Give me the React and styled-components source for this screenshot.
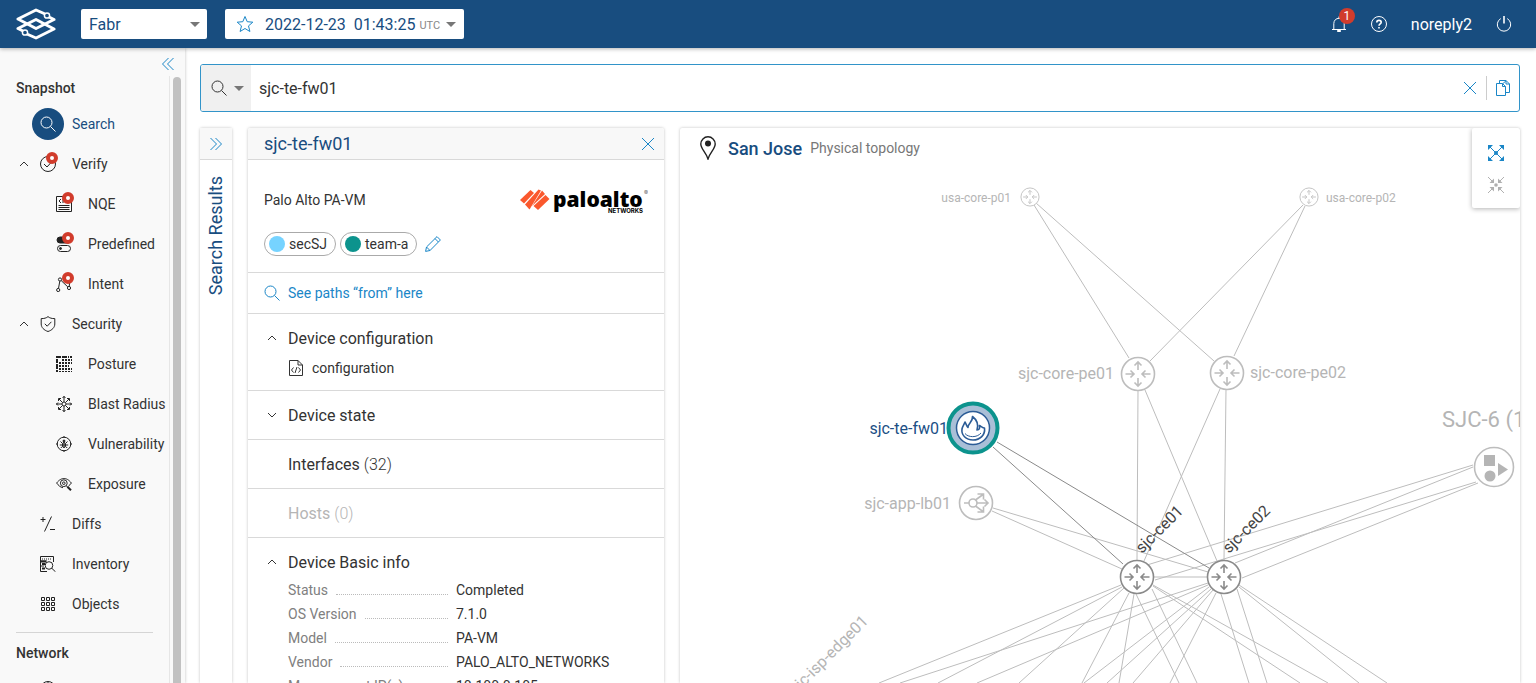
import styled, { createGlobalStyle } from "styled-components";

import { useState } from "react";

const GlobalStyle = createGlobalStyle`
    * {
        box-sizing: border-box;
    }

    body {
        margin: 0;
        background: #fff;
        color: #333;
        font-family: Roboto, sans-serif;
        font-size: 14px;
    }

    button, input, select {
        font-family: inherit;
        font-size: inherit;
        color: inherit;
    }

    a {
        color: inherit;
        text-decoration: none;
    }
`

// every small icon is drawn on a 16px grid with thin strokes
function Icon({ size = 16, label, children }){
    return (
        <IconSvg width={size} height={size} viewBox="0 0 16 16" role={label ? 'img' : undefined} aria-label={label} aria-hidden={label ? undefined : true}>
            {children}
        </IconSvg>
    )
}

const glass = <><circle cx="6.5" cy="6.5" r="5.5"/><path d="M10.5 10.5L15.5 15.5"/></>;
const cross = <path d="M2 2L14 14M14 2L2 14"/>;
const caretUp = <path d="M4 10L8 6L12 10"/>;
const caretDown = <path d="M4 6L8 10L12 6"/>;

const icons = {
    search: glass,
    verify: <><circle cx="8" cy="8" r="7.5"/><path d="M4 8L7 11L11.5 6"/></>,
    nqe: <><path d="M.5 .5H15.5V15.5H.5ZM2.5 9.5H13.5M2.5 11.5H13.5M2.5 13.5H13.5M5 3L3 5L5 7M7 3V7"/></>,
    predefined: <><rect x="1" y="1" width="14" height="6" rx="3" fill="currentColor"/><rect x="1.5" y="9.5" width="13" height="6" rx="3"/><circle cx="4.5" cy="12.5" r="1" fill="currentColor"/></>,
    intent: <><circle cx="2.2" cy="14" r="1.6"/><circle cx="4" cy="3.5" r="1.6"/><circle cx="13" cy="12" r="1.6"/><path d="M2.5 12.4L3.8 5.1M5.2 4.6L11.8 10.9M13.2 10.4L14 4"/></>,
    security: <><path d="M8 .6C6.5 2 4 2.7 1.2 2.6V8C1.2 11.5 4 14.2 8 15.5C12 14.2 14.8 11.5 14.8 8V2.6C12 2.7 9.5 2 8 .6Z"/><path d="M4.8 7.8L7.2 10.2L11.4 5.8"/></>,
    posture: <><path d="M1 0V16" strokeWidth="2" strokeDasharray="2 1 4 1 5 1"/><path d="M0 1H16" strokeWidth="2" strokeDasharray="5 1 5 1 1 1"/><path d="M6 4H16M3 7H16M3 10H13M3 13H16" strokeWidth="2" strokeDasharray="2 1"/><path d="M0 15.5H16" strokeDasharray="2 1"/></>,
    blast: <><circle cx="8" cy="8" r="2"/><path d="M8 0V6M8 10V16M0 8H6M10 8H16M3 3L6.5 6.5M9.5 9.5L13 13M13 3L9.5 6.5M6.5 9.5L3 13"/><path d="M6.5 2L8 .5L9.5 2M6.5 14L8 15.5L9.5 14M2 6.5L.5 8L2 9.5M14 6.5L15.5 8L14 9.5M2.5 5V2.5H5M11 2.5H13.5V5M13.5 11V13.5H11M5 13.5H2.5V11"/></>,
    vulnerability: <><circle cx="8" cy="8" r="6.8"/><path d="M8 0V2M8 14V16M0 8H2M14 8H16"/><ellipse cx="8" cy="9" rx="1.6" ry="2.6"/><path d="M8 6.5V11.5"/><circle cx="8" cy="5" r="1" fill="currentColor"/><path d="M4.5 5.5L6.3 7.3M11.5 5.5L9.7 7.3M3.8 9H12.2M4.8 12L6.3 10.5M11.2 12L9.7 10.5"/></>,
    exposure: <><path d="M.6 7C3.5 3.5 5.5 2.6 8 2.6S12.5 3.5 15.4 7C14.5 8.4 13.5 9.3 12.5 10M7 11.7C4.5 11.5 2.5 9.5 .6 7"/><circle cx="7.8" cy="7.2" r="3.4"/><circle cx="7.8" cy="7.2" r="1.3"/><path d="M10.3 9.8L11.5 11"/><path d="M11.4 10.8L15 14.3" strokeWidth="2"/></>,
    diffs: <><path d="M3 1V6M.5 3.5H5.5M10 13.5H15M11.5 .5L4.5 15.5"/></>,
    inventory: <><path d="M13.5 6V.5H.5V15.5H7M.5 5H7M.5 10H4"/><path d="M2 3H12" strokeDasharray="1 1"/><path d="M0 5.5H6M2 8H5M2 12.5H5" strokeWidth="2"/><circle cx="9" cy="9.5" r="3.8"/><path d="M11.8 12.3L15.5 15.8"/></>,
    objects: <path d="M1.5 1.5H4.5V4.5H1.5ZM6.5 1.5H9.5V4.5H6.5ZM11.5 1.5H14.5V4.5H11.5ZM1.5 6.5H4.5V9.5H1.5ZM6.5 6.5H9.5V9.5H6.5ZM11.5 6.5H14.5V9.5H11.5ZM1.5 11.5H4.5V14.5H1.5ZM6.5 11.5H9.5V14.5H6.5ZM11.5 11.5H14.5V14.5H11.5Z"/>,
    network: <><circle cx="8" cy="8" r="7.5"/><path d="M.5 8H15.5M8 .5V15.5"/></>,
};

const menu = [
    { icon: 'search', text: 'Search', active: true },
    { icon: 'verify', text: 'Verify', caret: true, alert: true },
    { icon: 'nqe', text: 'NQE', nested: true, alert: true },
    { icon: 'predefined', text: 'Predefined', nested: true, alert: true },
    { icon: 'intent', text: 'Intent', nested: true, alert: true },
    { icon: 'security', text: 'Security', caret: true },
    { icon: 'posture', text: 'Posture', nested: true },
    { icon: 'blast', text: 'Blast Radius', nested: true },
    { icon: 'vulnerability', text: 'Vulnerability', nested: true },
    { icon: 'exposure', text: 'Exposure', nested: true },
    { icon: 'diffs', text: 'Diffs' },
    { icon: 'inventory', text: 'Inventory' },
    { icon: 'objects', text: 'Objects' },
];

const basicInfo = [
    ['Status', 'Completed'],
    ['OS Version', '7.1.0'],
    ['Model', 'PA-VM'],
    ['Vendor', 'PALO_ALTO_NETWORKS'],
    ['Management IP(s)', '10.100.0.105'],
];

// x1, y1, x2, y2 on the canvas
const links = [
    [354, 77, 449, 230], [356, 75, 534, 233], [623, 77, 470, 233], [625, 78, 554, 228],
    [458, 262, 457, 432], [465, 262, 537, 433], [546, 261, 544, 432], [540, 261, 464, 433],
    [312, 383, 442, 441], [313, 380, 528, 444], [474, 449, 527, 449],
    [793, 337, 467, 437], [793, 339, 555, 435], [796, 354, 475, 452], [798, 355, 562, 450],
    [441, 457, 199, 555], [442, 459, 258, 555], [444, 460, 339, 555], [449, 465, 402, 555],
    [454, 466, 439, 555], [456, 466, 499, 555], [472, 461, 517, 555], [473, 458, 620, 555],
    [473, 457, 648, 555], [528, 455, 220, 555], [528, 457, 297, 555], [529, 459, 404, 555],
    [531, 461, 427, 555], [533, 462, 453, 555], [536, 465, 490, 555], [541, 466, 569, 555],
    [557, 461, 587, 555], [559, 459, 679, 555], [559, 457, 707, 555],
];

const activeLinks = [
    [313, 319, 443, 436], [317, 314, 529, 440],
];

function Logo(){
    return (
        <svg width="40" height="32" viewBox="0 0 40 32" role="img" aria-label="Forward">
            <g fill="none" stroke="#fff" strokeWidth="3" strokeLinejoin="round" strokeLinecap="round">
                <path d="M28 5.5L20 2L2 11L20 20.5L38 11.5L34 9.5"/>
                <path d="M12 26.5L20 30L38 21L20 11.5L2 20.5L6 22.5"/>
            </g>
            <g fill="#184d7f" stroke="#fff" strokeWidth="1.5">
                <circle cx="31" cy="7.5" r="2.6"/>
                <circle cx="9" cy="24.5" r="2.6"/>
            </g>
        </svg>
    )
}

function VendorLogo(){
    return (
        <svg width="130" height="28" viewBox="0 0 130 28" role="img" aria-label="Palo Alto Networks">
            <g fill="#fa582d">
                <path d="M2 14L12.5 4L16 7L6 17.5Z"/>
                <path d="M7 18.5L20.5 3.5L23 4.5L11.5 23.5Z"/>
                <path d="M24 4.5L27 8L14 20Z"/>
                <path d="M15.5 20L27.5 9L31.5 13L20 24Z"/>
            </g>
            <VendorText x="35" y="21">paloalto</VendorText>
            <VendorSub x="125" y="27" textAnchor="end">NETWORKS</VendorSub>
            <VendorSub x="126" y="9" $light>®</VendorSub>
        </svg>
    )
}

function Router({ x, y, scale = 1, strong }){
    return (
        <NodeGroup transform={`translate(${x} ${y}) scale(${scale})`} $strong={strong}>
            <circle r="16.5"/>
            <path d="M0 -4V-11.5M-3.5 -8.5L0 -12L3.5 -8.5M0 4V11.5M-3.5 8.5L0 12L3.5 8.5"/>
            <path d="M-12.5 0H-4.5M-7.5 -3.5L-4 0L-7.5 3.5M12.5 0H4.5M7.5 -3.5L4 0L7.5 3.5"/>
        </NodeGroup>
    )
}

function Topology(){
    return (
        <Canvas role="img" aria-label="San Jose topology">
            <g stroke="#bdbdbd">
                {links.map((l, i) => <line key={i} x1={l[0]} y1={l[1]} x2={l[2]} y2={l[3]}/>)}
            </g>
            <g stroke="#8a8a8a">
                {activeLinks.map((l, i) => <line key={i} x1={l[0]} y1={l[1]} x2={l[2]} y2={l[3]}/>)}
            </g>

            <Router x={350} y={69} scale={0.55}/>
            <Router x={629} y={69} scale={0.55}/>
            <Router x={458} y={246}/>
            <Router x={547} y={245}/>
            <Router x={457} y={449} strong/>
            <Router x={544} y={449} strong/>

            <NodeGroup transform="translate(296 375)">
                <circle r="16.5"/>
                <circle cx="-3" r="4"/>
                <path d="M-12 0H-7M1 0H12M8.5 -3.5L12 0L8.5 3.5M-.5 -3L7 -8.5M1.5 -9H7.5V-3.5M-.5 3L7 8.5M1.5 9H7.5V3.5"/>
            </NodeGroup>

            <g transform="translate(293 300)">
                <circle r="24.5" fill="#a9bfd7" stroke="#0c938d" strokeWidth="4"/>
                <circle r="16.5" fill="#fff" stroke="#2c5c96" strokeWidth="1.5"/>
                <path d="M-.5 -11.5C4 -8 6 -4 4 2C6.5 2 7 0 6.5 -2.5C9 -1 10 0 11.5 0C12.5 7 7 12 0 12C-7 12 -12 7 -11 1C-10.5 -2 -9 -3 -8 -6C-7 -4.5 -6.5 -2 -5 -.5C-5 -5 0 -6 -.5 -11.5Z" fill="none" stroke="#2c5c96" strokeWidth="1.6" strokeLinejoin="round"/>
                <path d="M-8 5.5C-5 9.5 4 10 8 5" fill="none" stroke="#2c5c96"/>
            </g>

            <NodeGroup transform="translate(814 339)">
                <circle r="19.5"/>
                <g fill="#b5b5b5" stroke="none">
                    <path d="M-10 -12H1V-1H-10Z"/>
                    <path d="M4 -4L14 2.5L4 9Z"/>
                    <path d="M-9.5 9A5.5 5.5 0 1 0 1.5 9A5.5 5.5 0 1 0 -9.5 9Z"/>
                </g>
            </NodeGroup>

            <NodeLabel x="331" y="74" textAnchor="end" $small>usa-core-p01</NodeLabel>
            <NodeLabel x="646" y="74" $small>usa-core-p02</NodeLabel>
            <NodeLabel x="434" y="251" textAnchor="end">sjc-core-pe01</NodeLabel>
            <NodeLabel x="570" y="250">sjc-core-pe02</NodeLabel>
            <NodeLabel x="268" y="306" textAnchor="end" $color="#1b4f85">sjc-te-fw01</NodeLabel>
            <NodeLabel x="271" y="381" textAnchor="end">sjc-app-lb01</NodeLabel>
            <NodeLabel $large x="762" y="299">SJC-6 (1)</NodeLabel>
            <NodeLabel transform="translate(462 426) rotate(-45)" $color="#444">sjc-ce01</NodeLabel>
            <NodeLabel transform="translate(549 426) rotate(-45)" $color="#444">sjc-ce02</NodeLabel>
            <NodeLabel transform="translate(189 494) rotate(-45)" textAnchor="end">sjc-isp-edge01</NodeLabel>
        </Canvas>
    )
}

function Section({ title, count, startOpen, disabled, children }){
    const [open, setOpen] = useState(startOpen);

    return (
        <SectionBox>
            <SectionTitle disabled={disabled} onClick={() => setOpen(!open)}>
                <CaretBox>
                    {children && <Icon>{open ? caretUp : caretDown}</Icon>}
                </CaretBox>
                {title} {count !== undefined && <Count>({count})</Count>}
            </SectionTitle>
            {open && children}
        </SectionBox>
    )
}

function App(){
    return (
        <Page>
            <GlobalStyle/>

            <TopBar>
                <Logo/>
                <NetworkSelect>
                    <select aria-label="Network" defaultValue="Fabr">
                        <option>Fabr</option>
                    </select>
                    <Triangle/>
                </NetworkSelect>
                <SnapshotButton>
                    <Star width="18" height="18" viewBox="0 0 18 18" aria-hidden="true">
                        <path d="M9 1.5L11.2 6.7L16.8 7.2L12.5 10.9L13.9 16.5L9 13.5L4.1 16.5L5.5 10.9L1.2 7.2L6.8 6.7Z"/>
                    </Star>
                    <span>2022-12-23&nbsp; 01:43:25</span>
                    <Zone>UTC</Zone>
                    <Triangle/>
                </SnapshotButton>
                <TopRight>
                    <BarButton aria-label="Notifications">
                        <Icon><path d="M1 13.5H15M2.8 13.5V7.5C2.8 4.5 5 2.3 8 2.3S13.2 4.5 13.2 7.5V13.5M8 .5V2.3"/><path d="M6.2 15H9.8" strokeWidth="2"/></Icon>
                        <Counter>1</Counter>
                    </BarButton>
                    <BarButton aria-label="Help">
                        <Icon><circle cx="8" cy="8" r="7.5"/><path d="M5.8 6.4C5.8 3.6 10.2 3.7 10.2 6.3C10.2 8 8 7.9 8 9.8M8 11V12.5" strokeWidth="1.6"/></Icon>
                    </BarButton>
                    <User href="#">noreply2</User>
                    <BarButton aria-label="Sign out">
                        <Icon><path d="M4.8 2.6A6.7 6.7 0 1 0 11.2 2.6"/><path d="M8 0V7.5" strokeWidth="1.6"/></Icon>
                    </BarButton>
                </TopRight>
            </TopBar>

            <Body>
                <SideBar>
                    <CollapseRow>
                        <BlueButton aria-label="Collapse menu">
                            <Icon><path d="M8.5 2L2.5 8L8.5 14M13.5 2L7.5 8L13.5 14"/></Icon>
                        </BlueButton>
                    </CollapseRow>
                    <MenuArea>
                        <Menu>
                            <MenuTitle>Snapshot</MenuTitle>
                            {menu.map((item) => (
                                <MenuItem key={item.text} href="#" $active={item.active}>
                                    <CaretBox>
                                        {item.caret && <Icon>{caretUp}</Icon>}
                                    </CaretBox>
                                    <MenuIcon $active={item.active} $nested={item.nested}>
                                        <Icon>{icons[item.icon]}</Icon>
                                        {item.alert && <AlertDot/>}
                                    </MenuIcon>
                                    {item.text}
                                </MenuItem>
                            ))}
                            <Divider/>
                            <MenuTitle>Network</MenuTitle>
                            <MenuItem href="#">
                                <CaretBox/>
                                <MenuIcon>
                                    <Icon>{icons.network}</Icon>
                                </MenuIcon>
                            </MenuItem>
                        </Menu>
                        <Track>
                            <Thumb/>
                        </Track>
                    </MenuArea>
                </SideBar>

                <Main>
                    <SearchBar>
                        <SearchKind aria-label="Search type">
                            <Icon>{glass}</Icon>
                            <Triangle/>
                        </SearchKind>
                        <input aria-label="Search" defaultValue="sjc-te-fw01"/>
                        <BlueButton aria-label="Clear search">
                            <Icon>{cross}</Icon>
                        </BlueButton>
                        <Separator/>
                        <BlueButton aria-label="Copy">
                            <Icon><path d="M1.5 3.5H7.5L10.5 6.5V15.5H1.5ZM7.5 3.5V6.5H10.5M4.5 3.5V.5H11L14.5 4V12.5H10.5M11 .5V4H14.5M8 3.5L11 .8"/></Icon>
                        </BlueButton>
                    </SearchBar>

                    <Panels>
                        <Rail>
                            <PanelHeader $center>
                                <BlueButton aria-label="Expand search results">
                                    <Icon><path d="M2.5 2L8.5 8L2.5 14M7.5 2L13.5 8L7.5 14"/></Icon>
                                </BlueButton>
                            </PanelHeader>
                            <RailText>Search Results</RailText>
                        </Rail>

                        <Device>
                            <PanelHeader>
                                <h2>sjc-te-fw01</h2>
                                <BlueButton aria-label="Close">
                                    <Icon>{cross}</Icon>
                                </BlueButton>
                            </PanelHeader>

                            <Summary>
                                <SummaryRow>
                                    <span>Palo Alto PA-VM</span>
                                    <VendorLogo/>
                                </SummaryRow>
                                <Tags>
                                    <Tag $color="#76d3ff">secSJ</Tag>
                                    <Tag $color="#0c938d">team-a</Tag>
                                    <BlueButton aria-label="Edit tags">
                                        <Icon><path d="M.6 15.4L1.5 11L12 .6L15.4 4L5 14.5L.6 15.4ZM10 2.6L13.4 6M1.5 11L5 14.5"/></Icon>
                                    </BlueButton>
                                </Tags>
                            </Summary>

                            <PathLink href="#">
                                <Icon>{glass}</Icon>
                                See paths “from” here
                            </PathLink>

                            <Section title="Device configuration" startOpen>
                                <FileLink href="#">
                                    <Icon><path d="M1.5 .5H10L14.5 5V15.5H1.5ZM10 .5V5H14.5M5.5 7.5L3.5 10L5.5 12.5M10.5 7.5L12.5 10L10.5 12.5M9 7L7 13"/></Icon>
                                    configuration
                                </FileLink>
                            </Section>
                            <Section title="Device state">
                                <FileLink href="#">state</FileLink>
                            </Section>
                            <Section title="Interfaces" count={32}/>
                            <Section title="Hosts" count={0} disabled/>
                            <Section title="Device Basic info" startOpen>
                                <Info>
                                    {basicInfo.map(([name, value]) => (
                                        <InfoRow key={name}>
                                            <dt>{name}</dt>
                                            <dd>{value}</dd>
                                        </InfoRow>
                                    ))}
                                </Info>
                            </Section>
                        </Device>

                        <MapPanel>
                            <Topology/>
                            <MapTitle>
                                <svg width="16" height="24" viewBox="0 0 16 24" aria-hidden="true">
                                    <path d="M8 23C6 16 .8 13 .8 8A7.2 7.2 0 0 1 15.2 8C15.2 13 10 16 8 23Z" fill="none" stroke="#222" strokeWidth="1.4"/>
                                    <circle cx="8" cy="7.5" r="3" fill="#222"/>
                                </svg>
                                <h1>San Jose</h1>
                                <span>Physical topology</span>
                            </MapTitle>
                            <MapTools>
                                <BlueButton aria-label="Expand all">
                                    <Icon><path d="M1 1L15 15M15 1L1 15"/><g fill="currentColor" stroke="none"><path d="M0 0H5L0 5ZM16 0V5L11 0ZM0 16V11L5 16ZM16 16H11L16 11Z"/><circle cx="8" cy="8" r="2"/></g></Icon>
                                </BlueButton>
                                <BlueButton aria-label="Collapse all" disabled>
                                    <Icon><path d="M0 0L5 5M16 0L11 5M0 16L5 11M16 16L11 11"/><g fill="currentColor" stroke="none"><path d="M6 1.5V6H1.5ZM10 1.5V6H14.5ZM6 14.5V10H1.5ZM10 14.5V10H14.5Z"/><circle cx="8" cy="8" r="1.8"/></g></Icon>
                                </BlueButton>
                            </MapTools>
                        </MapPanel>
                    </Panels>
                </Main>
            </Body>
        </Page>
    )
}
export default App;

const Page = styled.div`
display: flex;
flex-direction: column;
height: 100vh;
overflow: hidden;
`

const IconSvg = styled.svg`
display: block;
flex-shrink: 0;
fill: none;
stroke: currentColor;
stroke-width: 1;
`

const TopBar = styled.header`
position: relative;
z-index: 2;
display: flex;
align-items: center;
flex-shrink: 0;
height: 48px;
padding: 0 24px 0 16px;
background: #184d7f;
color: #fff;
font-size: 16px;
box-shadow: 0 1px 4px rgba(0, 0, 0, .3);
`

const Triangle = styled.i`
border: 5px solid transparent;
border-top-color: #777;
border-bottom: 0;
pointer-events: none;
`

const NetworkSelect = styled.div`
display: grid;
align-items: center;
width: 126px;
height: 30px;
margin-left: 25px;
border-radius: 2px;
background: #fff;
color: #184d7f;

    select, ${Triangle} {
        grid-area: 1 / 1;
    }

    select {
        width: 100%;
        height: 30px;
        padding: 0 8px;
        border: 0;
        background: none;
        appearance: none;
    }

    ${Triangle} {
        justify-self: end;
        margin-right: 7px;
    }
`

const SnapshotButton = styled.button`
display: flex;
align-items: center;
height: 30px;
margin-left: 18px;
padding: 0 8px 0 11px;
border: 0;
border-radius: 2px;
background: #fff;
color: #184d7f;
white-space: nowrap;
`

const Star = styled.svg`
margin-right: 11px;
fill: none;
stroke: #1a86c7;
`

const Zone = styled.span`
margin: 3px 6px 0 4px;
color: #888;
font-size: 11px;
`

const TopRight = styled.div`
display: flex;
align-items: center;
gap: 24px;
margin-left: auto;
`

const BarButton = styled.button`
position: relative;
padding: 0;
border: 0;
background: none;
color: #fff;
cursor: pointer;
`

const Counter = styled.span`
position: absolute;
top: -8px;
left: 8px;
width: 16px;
height: 16px;
border-radius: 50%;
background: #d13c2c;
font-size: 12px;
line-height: 16px;
text-align: center;
`

const User = styled.a`
color: #fff;
`

const BlueButton = styled.button`
display: flex;
align-items: center;
justify-content: center;
width: 16px;
height: 16px;
padding: 0;
border: 0;
background: none;
color: #1a86c7;
cursor: pointer;

    &:disabled {
        color: #b0b0b0;
        cursor: default;
    }
`

const Body = styled.div`
display: flex;
flex: 1;
min-height: 0;
`

const SideBar = styled.aside`
display: flex;
flex-direction: column;
flex-shrink: 0;
width: 185px;
background: #f9f9f9;
box-shadow: 0 0 3px rgba(0, 0, 0, .25);
`

const CollapseRow = styled.div`
display: flex;
justify-content: flex-end;
padding: 8px 9px 4px 0;
`

const MenuArea = styled.div`
display: flex;
flex: 1;
min-height: 0;
overflow: hidden;
`

const Menu = styled.nav`
flex: 1;
min-width: 0;
`

const Track = styled.div`
width: 16px;
padding: 1px 3px 0;
border-left: 1px solid #e6e6e6;
`

const Thumb = styled.div`
width: 8px;
height: 100%;
border-radius: 4px 4px 0 0;
background: #c1c1c1;
`

const MenuTitle = styled.h3`
margin: 0 0 4px;
padding-left: 16px;
font-size: 14px;
font-weight: 500;
line-height: 24px;
`

const CaretBox = styled.span`
display: flex;
flex-shrink: 0;
width: 16px;
`

const MenuItem = styled.a`
display: flex;
align-items: center;
height: 40px;
padding-left: 16px;
color: ${props => props.$active ? '#184d7f' : '#333'};
white-space: nowrap;
`

const MenuIcon = styled.span`
position: relative;
display: flex;
align-items: center;
justify-content: center;
flex-shrink: 0;
width: 32px;
height: 32px;
margin: 0 8px 0 ${props => props.$nested ? '16px' : '0'};
border-radius: 50%;
background: ${props => props.$active ? '#184d7f' : 'none'};
color: ${props => props.$active ? '#fff' : '#222'};
`

const AlertDot = styled.i`
position: absolute;
top: 4px;
right: 6px;
width: 12px;
height: 12px;
border: 4px solid #d13c2c;
border-radius: 50%;
background: #fff;
`

const Divider = styled.hr`
margin: 8px 16px 8px;
border: 0;
border-top: 1px solid #d5d5d5;
`

const Main = styled.main`
display: flex;
flex-direction: column;
flex: 1;
min-width: 0;
padding: 16px 16px 0 15px;
`

const SearchBar = styled.div`
display: flex;
align-items: center;
flex-shrink: 0;
height: 48px;
padding-right: 8px;
border: 1px solid #3294c9;
border-radius: 3px;
overflow: hidden;

    input {
        flex: 1;
        min-width: 0;
        height: 100%;
        padding: 0 8px;
        border: 0;
        outline: 0;
        font-size: 16px;
    }
`

const SearchKind = styled.button`
display: flex;
align-items: center;
justify-content: space-between;
width: 50px;
height: 100%;
padding: 0 7px 0 10px;
border: 0;
background: #f0f0f0;
`

const Separator = styled.div`
width: 1px;
height: 24px;
margin: 0 8px;
background: #ccc;
`

const Panels = styled.div`
display: flex;
flex: 1;
min-height: 0;
gap: 16px;
padding-top: 16px;
`

const Panel = styled.section`
flex-shrink: 0;
background: #fff;
border-radius: 2px 2px 0 0;
box-shadow: 0 0 3px rgba(0, 0, 0, .25);
`

const Rail = styled(Panel)`
width: 32px;
`

const RailText = styled.div`
margin-top: 16px;
width: 32px;
color: #184d7f;
font-size: 18px;
line-height: 32px;
writing-mode: vertical-rl;
transform: rotate(180deg);
`

const Device = styled(Panel)`
width: 416px;
overflow: hidden;
`

const PanelHeader = styled.div`
display: flex;
align-items: center;
justify-content: ${props => props.$center ? 'center' : 'space-between'};
height: 32px;
padding: ${props => props.$center ? '0' : '0 8px 0 16px'};
border-bottom: 1px solid #d9d9d9;
background: #f8f8f8;

    h2 {
        margin: 0;
        color: #184d7f;
        font-size: 18px;
        font-weight: 400;
    }
`

const Summary = styled.div`
padding: 24px 16px 16px;
border-bottom: 1px solid #d9d9d9;
`

const SummaryRow = styled.div`
display: flex;
align-items: center;
justify-content: space-between;
height: 32px;
margin-bottom: 16px;
`

const Tags = styled.div`
display: flex;
align-items: center;
gap: 4px;

    button {
        margin-left: 4px;
    }
`

const Tag = styled.span`
display: flex;
align-items: center;
gap: 4px;
height: 24px;
padding: 0 8px 0 4px;
border: 1px solid #aaa;
border-radius: 12px;

    &::before {
        content: '';
        width: 16px;
        height: 16px;
        border-radius: 50%;
        background: ${props => props.$color};
    }
`

const PathLink = styled.a`
display: flex;
align-items: center;
gap: 8px;
height: 41px;
padding: 0 16px;
border-bottom: 1px solid #d9d9d9;
color: #1a86c7;
`

const SectionBox = styled.div`
padding: 12px 16px;
border-bottom: 1px solid #d9d9d9;
`

const SectionTitle = styled.button`
display: flex;
align-items: center;
width: 100%;
height: 24px;
padding: 0;
border: 0;
background: none;
font-size: 16px;
text-align: left;
white-space: pre;

    ${CaretBox} {
        margin-right: 8px;
    }

    &:disabled {
        color: #b5b5b5;
    }
`

const Count = styled.span`
font-weight: 300;
`

const FileLink = styled.a`
display: flex;
align-items: center;
gap: 8px;
padding: 8px 0 0 24px;
line-height: 20px;
`

const Info = styled.dl`
margin: 4px 0 0;
padding-left: 24px;
`

const InfoRow = styled.div`
display: flex;
line-height: 24px;

    dt {
        display: flex;
        width: 168px;
        color: #808080;
    }

    dt::after {
        content: '';
        flex: 1;
        height: 16px;
        margin: 0 8px;
        border-bottom: 1px dotted #bbb;
    }

    dd {
        margin: 0;
    }
`

const MapPanel = styled(Panel)`
position: relative;
flex: 1;
min-width: 0;
overflow: hidden;
`

const MapTitle = styled.div`
position: relative;
display: flex;
align-items: center;
padding: 8px 20px;

    h1 {
        margin: 0 8px 0 12px;
        color: #184d7f;
        font-size: 18px;
        font-weight: 500;
    }

    span {
        color: #777;
    }
`

const MapTools = styled.div`
position: absolute;
top: 0;
right: 0;
display: flex;
flex-direction: column;
align-items: center;
gap: 16px;
width: 48px;
height: 80px;
padding-top: 17px;
border-radius: 2px;
background: #fff;
box-shadow: 0 1px 5px rgba(0, 0, 0, .3);
`

const Canvas = styled.svg`
position: absolute;
top: 0;
left: 0;
width: 100%;
height: 100%;
`

const NodeGroup = styled.g`
fill: none;
stroke: ${props => props.$strong ? '#8a8a8a' : '#bdbdbd'};
stroke-width: 1.6;

    > circle {
        fill: #fff;
    }
`

const NodeLabel = styled.text`
fill: ${props => props.$color || '#b5b5b5'};
font-size: ${props => props.$small ? '12px' : props.$large ? '22px' : '16px'};
`

const VendorText = styled.text`
fill: #000;
font-family: "Open Sans", sans-serif;
font-size: 21px;
font-weight: 800;
`

const VendorSub = styled.text`
fill: ${props => props.$light ? '#666' : '#000'};
font-family: Inter, sans-serif;
font-size: 6px;
font-weight: ${props => props.$light ? 400 : 700};
`
